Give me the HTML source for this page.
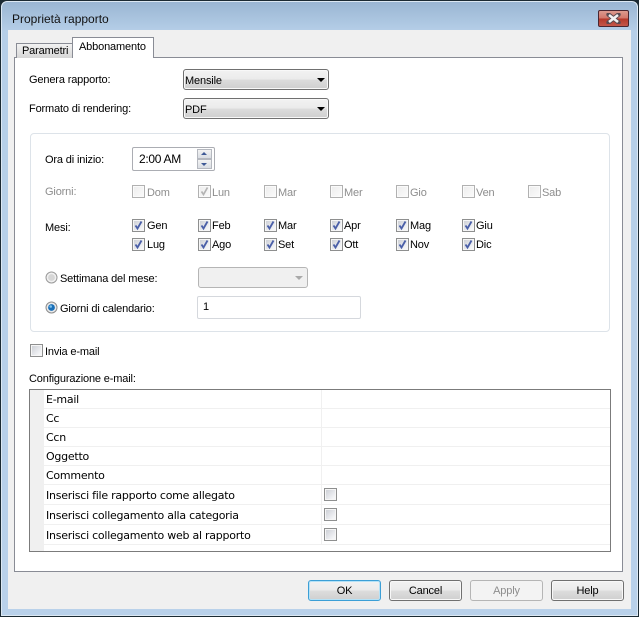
<!DOCTYPE html>
<html><head><meta charset="utf-8"><style>
html,body{margin:0;padding:0;background:#fff}
#w{position:relative;width:639px;height:617px;overflow:hidden;background:#1b2a33;font:11px "Liberation Sans",sans-serif;color:#000;letter-spacing:-.15px}
#w div,#w span.a{position:absolute;box-sizing:border-box;white-space:nowrap}
.t{line-height:14px;height:14px}
.g{color:#8d8d8d}
.cb{width:13px;height:13px;border:1px solid #8e8f8f;background:linear-gradient(135deg,#c9ccd3,#f4f5f7 80%);box-shadow:inset 0 0 0 1px #f6f6f6}
.cb svg{position:absolute;left:0;top:0}
.dis{border-color:#b1b1b1;background:linear-gradient(135deg,#ececec,#fbfbfb);box-shadow:inset 0 0 0 1px #fafafa}
.sel{border:1px solid #707070;border-radius:3px;background:linear-gradient(#f2f2f2 0,#ebebeb 48%,#dcdcdc 52%,#cfcfcf 100%);box-shadow:inset 0 0 0 1px #f8f8f8;height:21px;width:146px;left:183px}
.arr{width:0;height:0;border-left:4px solid transparent;border-right:4px solid transparent;border-top:4px solid #000}
.btn{top:580px;height:21px;width:73px;border:1px solid #707070;border-radius:3px;background:linear-gradient(#f2f2f2 0,#ebebeb 48%,#dddddd 52%,#cfcfcf 100%);box-shadow:inset 0 0 0 1px #f8f8f8;text-align:center;line-height:21px}
.row{left:44px;width:566px;height:1px;background:#f0f0f0}
.gt{left:46px;font:11px/14px "DejaVu Sans",sans-serif;letter-spacing:-.25px}
</style></head><body><div id="w">
<div style="left:1px;top:1px;width:637px;height:615px;border-radius:6px 6px 0 0;background:linear-gradient(#9ab6d3 0,#b6cfe8 30px,#b9d1ea 100%);border:1px solid #dce8f3"></div>
<div class="t" style="left:12px;top:12px;font-size:12px;letter-spacing:0;color:#111">Proprietà rapporto</div>

<div style="left:598px;top:10px;width:31px;height:17px;border:1px solid #4a2630;border-radius:2px;background:linear-gradient(#dc9b8f 0,#d2776a 48%,#b4382a 52%,#c4574a 100%)"></div>
<svg style="position:absolute;left:606px;top:13px" width="15" height="11"><path d="M2.5 1.5L12.5 9.5M12.5 1.5L2.5 9.5" stroke="#5a4a50" stroke-width="4.4" stroke-linecap="round"/><path d="M3 2L12 9M12 2L3 9" stroke="#f2f2f2" stroke-width="2.6"/></svg>

<div style="left:8px;top:30px;width:623px;height:579px;background:#f0f0f0"></div>

<div style="left:14px;top:57px;width:609px;height:515px;background:#fff;border:1px solid #898c95"></div>
<div style="left:16px;top:43px;width:57px;height:15px;background:linear-gradient(#f2f2f2,#d6d6d6);border:1px solid #898c95;border-bottom:none"></div>
<div class="t" style="left:22px;top:43px;line-height:16px;height:16px">Parametri</div>
<div style="left:72px;top:37px;width:82px;height:21px;background:#fff;border:1px solid #898c95;border-bottom:none"></div>
<div class="t" style="left:79px;top:40px">Abbonamento</div>

<div class="t" style="left:29px;top:73px">Genera rapporto:</div>
<div class="t" style="left:29px;top:102px">Formato di rendering:</div>
<div class="sel" style="top:69px"></div>
<div class="t" style="left:185px;top:74px">Mensile</div>
<div class="arr" style="left:317px;top:78px"></div>
<div class="sel" style="top:98px"></div>
<div class="t" style="left:185px;top:103px">PDF</div>
<div class="arr" style="left:317px;top:107px"></div>

<div style="left:30px;top:133px;width:580px;height:199px;border:1px solid #dde3e9;border-radius:4px"></div>

<div class="t" style="left:45px;top:153px">Ora di inizio:</div>
<div style="left:132px;top:147px;width:83px;height:24px;border:1px solid #abadb3;border-radius:2px;background:#fff"></div>
<div class="t" style="left:139px;top:152px;font-size:12px;letter-spacing:-.3px">2:00 AM</div>
<div style="left:197px;top:149px;width:15px;height:10px;border:1px solid #b5b8bf;background:linear-gradient(#f3f3f3,#d9dde3)"></div>
<div style="left:197px;top:159px;width:15px;height:10px;border:1px solid #b5b8bf;background:linear-gradient(#f3f3f3,#d9dde3)"></div>
<div style="left:201px;top:152px;width:0;height:0;border-left:3.5px solid transparent;border-right:3.5px solid transparent;border-bottom:3px solid #3f5a96"></div>
<div style="left:201px;top:163px;width:0;height:0;border-left:3.5px solid transparent;border-right:3.5px solid transparent;border-top:3px solid #3f5a96"></div>

<div class="t g" style="left:45px;top:185px">Giorni:</div>
<div class="cb dis" style="left:132px;top:185px"></div><div class="t g" style="left:147px;top:186px">Dom</div>
<div class="cb dis" style="left:198px;top:185px"><svg width="11" height="11"><path d="M2.5 5.5L4.5 8.5L8.5 1.5" fill="none" stroke="#b4b4b4" stroke-width="1.7"/></svg></div><div class="t g" style="left:212px;top:186px">Lun</div>
<div class="cb dis" style="left:264px;top:185px"></div><div class="t g" style="left:278px;top:186px">Mar</div>
<div class="cb dis" style="left:330px;top:185px"></div><div class="t g" style="left:344px;top:186px">Mer</div>
<div class="cb dis" style="left:396px;top:185px"></div><div class="t g" style="left:410px;top:186px">Gio</div>
<div class="cb dis" style="left:462px;top:185px"></div><div class="t g" style="left:476px;top:186px">Ven</div>
<div class="cb dis" style="left:528px;top:185px"></div><div class="t g" style="left:542px;top:186px">Sab</div>

<div class="t" style="left:45px;top:221px">Mesi:</div>

<div class="cb" style="left:132px;top:219px"><svg width="11" height="11"><path d="M2.5 5.5L4.5 8.5L8.5 1.5" fill="none" stroke="#4a5fa8" stroke-width="1.8"/></svg></div><div class="t" style="left:147px;top:219px">Gen</div>
<div class="cb" style="left:198px;top:219px"><svg width="11" height="11"><path d="M2.5 5.5L4.5 8.5L8.5 1.5" fill="none" stroke="#4a5fa8" stroke-width="1.8"/></svg></div><div class="t" style="left:212px;top:219px">Feb</div>
<div class="cb" style="left:264px;top:219px"><svg width="11" height="11"><path d="M2.5 5.5L4.5 8.5L8.5 1.5" fill="none" stroke="#4a5fa8" stroke-width="1.8"/></svg></div><div class="t" style="left:278px;top:219px">Mar</div>
<div class="cb" style="left:330px;top:219px"><svg width="11" height="11"><path d="M2.5 5.5L4.5 8.5L8.5 1.5" fill="none" stroke="#4a5fa8" stroke-width="1.8"/></svg></div><div class="t" style="left:344px;top:219px">Apr</div>
<div class="cb" style="left:396px;top:219px"><svg width="11" height="11"><path d="M2.5 5.5L4.5 8.5L8.5 1.5" fill="none" stroke="#4a5fa8" stroke-width="1.8"/></svg></div><div class="t" style="left:410px;top:219px">Mag</div>
<div class="cb" style="left:462px;top:219px"><svg width="11" height="11"><path d="M2.5 5.5L4.5 8.5L8.5 1.5" fill="none" stroke="#4a5fa8" stroke-width="1.8"/></svg></div><div class="t" style="left:476px;top:219px">Giu</div>

<div class="cb" style="left:132px;top:238px"><svg width="11" height="11"><path d="M2.5 5.5L4.5 8.5L8.5 1.5" fill="none" stroke="#4a5fa8" stroke-width="1.8"/></svg></div><div class="t" style="left:147px;top:238px">Lug</div>
<div class="cb" style="left:198px;top:238px"><svg width="11" height="11"><path d="M2.5 5.5L4.5 8.5L8.5 1.5" fill="none" stroke="#4a5fa8" stroke-width="1.8"/></svg></div><div class="t" style="left:212px;top:238px">Ago</div>
<div class="cb" style="left:264px;top:238px"><svg width="11" height="11"><path d="M2.5 5.5L4.5 8.5L8.5 1.5" fill="none" stroke="#4a5fa8" stroke-width="1.8"/></svg></div><div class="t" style="left:278px;top:238px">Set</div>
<div class="cb" style="left:330px;top:238px"><svg width="11" height="11"><path d="M2.5 5.5L4.5 8.5L8.5 1.5" fill="none" stroke="#4a5fa8" stroke-width="1.8"/></svg></div><div class="t" style="left:344px;top:238px">Ott</div>
<div class="cb" style="left:396px;top:238px"><svg width="11" height="11"><path d="M2.5 5.5L4.5 8.5L8.5 1.5" fill="none" stroke="#4a5fa8" stroke-width="1.8"/></svg></div><div class="t" style="left:410px;top:238px">Nov</div>
<div class="cb" style="left:462px;top:238px"><svg width="11" height="11"><path d="M2.5 5.5L4.5 8.5L8.5 1.5" fill="none" stroke="#4a5fa8" stroke-width="1.8"/></svg></div><div class="t" style="left:476px;top:238px">Dic</div>

<svg style="position:absolute;left:45px;top:271px" width="13" height="13"><circle cx="6.5" cy="6.5" r="5.5" fill="#f0f0f0" stroke="#9a9a9a"/><circle cx="6.5" cy="6.5" r="3.4" fill="#d6d6d6"/></svg>
<div class="t" style="left:60px;top:272px">Settimana del mese:</div>
<div style="left:198px;top:267px;width:110px;height:21px;border:1px solid #b5b5b5;border-radius:3px;background:#f0f0f0"></div>
<div style="left:295px;top:276px;width:0;height:0;border-left:4px solid transparent;border-right:4px solid transparent;border-top:4px solid #a9a9a9"></div>

<svg style="position:absolute;left:45px;top:301px" width="13" height="13"><circle cx="6.5" cy="6.5" r="5.5" fill="#eaeaea" stroke="#8d8d8d"/><circle cx="6.5" cy="6.5" r="3.4" fill="#1a6fb8"/><circle cx="5.7" cy="5.5" r="1.3" fill="#7cc0ea"/></svg>
<div class="t" style="left:60px;top:302px">Giorni di calendario:</div>
<div style="left:197px;top:296px;width:164px;height:23px;border:1px solid #d5d8dd;border-radius:2px;background:#fff"></div>
<div class="t" style="left:203px;top:300px">1</div>

<div class="cb" style="left:30px;top:344px"></div>
<div class="t" style="left:45px;top:345px">Invia e-mail</div>
<div class="t" style="left:29px;top:372px">Configurazione e-mail:</div>

<div style="left:29px;top:389px;width:582px;height:163px;border:1px solid #7b7b7b;background:#fff"></div>
<div style="left:30px;top:390px;width:14px;height:161px;background:#f0f0f0"></div>
<div style="left:321px;top:390px;width:1px;height:154px;background:#f0f0f0"></div>
<div class="row" style="top:408px"></div>
<div class="row" style="top:427px"></div>
<div class="row" style="top:446px"></div>
<div class="row" style="top:465px"></div>
<div class="row" style="top:484px"></div>
<div class="row" style="top:504px"></div>
<div class="row" style="top:524px"></div>
<div class="row" style="top:544px"></div>
<div class="gt" style="top:393px">E-mail</div>
<div class="gt" style="top:412px">Cc</div>
<div class="gt" style="top:431px">Ccn</div>
<div class="gt" style="top:450px">Oggetto</div>
<div class="gt" style="top:469px">Commento</div>
<div class="gt" style="top:489px">Inserisci file rapporto come allegato</div>
<div class="gt" style="top:509px">Inserisci collegamento alla categoria</div>
<div class="gt" style="top:529px">Inserisci collegamento web al rapporto</div>
<div class="cb" style="left:324px;top:488px"></div>
<div class="cb" style="left:324px;top:508px"></div>
<div class="cb" style="left:324px;top:528px"></div>

<div class="btn" style="left:308px;border-color:#3c9fd6;box-shadow:inset 0 0 0 1px #b5e2f7">OK</div>
<div class="btn" style="left:389px">Cancel</div>
<div class="btn" style="left:470px;border-color:#b5b5b5;background:#f3f3f3;box-shadow:none;color:#8d8d8d">Apply</div>
<div class="btn" style="left:551px">Help</div>
</div></body></html>
